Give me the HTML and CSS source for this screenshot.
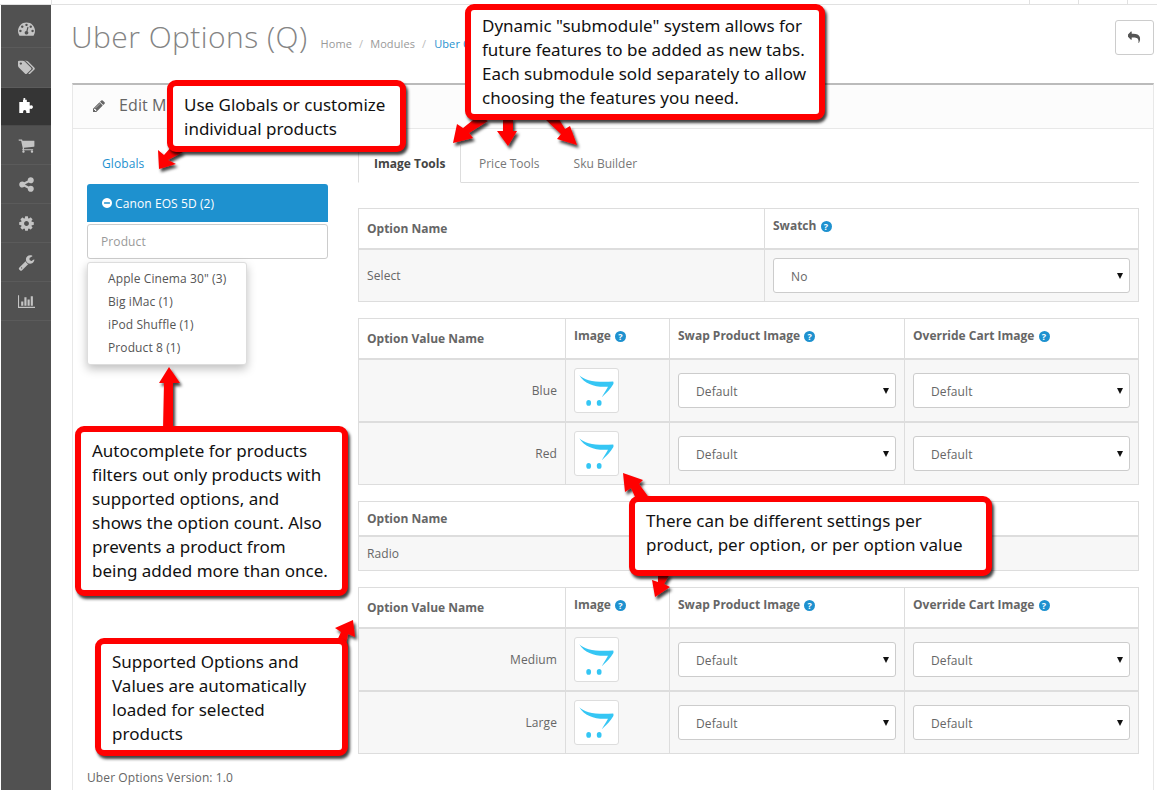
FILE: index.html
```html
<!DOCTYPE html>
<html lang="en">
<head>
<meta charset="utf-8">
<title>Uber Options (Q)</title>
<link rel="stylesheet" href="styles.css">
</head>
<body>
<svg class="defs" width="0" height="0" aria-hidden="true">
  <defs>
    <symbol id="cart-logo" viewBox="0 0 45 45">
      <path d="M4.500 6.500C10 12 22 14.500 40 13C40.500 14 40.500 15 40 16C37 21 33 25 28 29.500C30.500 25 33 21.500 34.500 18.500C22 19.500 10 16 4.500 6.500Z" fill="#35c6f4"/>
      <ellipse cx="14.300" cy="35.500" rx="2.500" ry="3" fill="#35c6f4"/>
      <ellipse cx="25.300" cy="35.500" rx="2.500" ry="3" fill="#35c6f4"/>
    </symbol>
    <filter id="arrow-shadow" x="-30%" y="-30%" width="170%" height="170%">
      <feDropShadow dx="2" dy="3" stdDeviation="1.500" flood-color="#000" flood-opacity=".75"/>
    </filter>
  </defs>
</svg>

<div class="topbar">
  <div class="topbar-logo"></div>
  <div class="topbar-fill"></div>
  <div class="topbar-cell"></div>
  <div class="topbar-cell"></div>
  <div class="topbar-cell topbar-cell-last"></div>
</div>

<div class="shell">
  <nav class="sidebar">
    <a class="nav-item nav-first"><svg class="nav-icon" viewBox="0 0 1792 1792"><path d="M384 1152q0-53-37.500-90.500t-90.500-37.500-90.500 37.500-37.500 90.500 37.500 90.500 90.500 37.500 90.500-37.500 37.500-90.500zm192-448q0-53-37.500-90.500t-90.500-37.500-90.500 37.500-37.500 90.500 37.500 90.500 90.500 37.500 90.500-37.500 37.500-90.500zm428 481l101-382q6-26-7.500-48.500t-38.500-29.500-48 6.500-30 39.500l-101 382q-60 5-107 43.500t-63 98.500q-20 77 20 146t117 89 146-20 89-117q16-60-6-117t-72-91zm660-33q0-53-37.500-90.500t-90.500-37.500-90.500 37.500-37.500 90.500 37.500 90.500 90.500 37.500 90.500-37.500 37.500-90.500zm-640-640q0-53-37.500-90.500t-90.500-37.500-90.500 37.500-37.500 90.500 37.500 90.500 90.500 37.500 90.500-37.500 37.500-90.500zm448 192q0-53-37.500-90.500t-90.500-37.500-90.500 37.500-37.500 90.500 37.500 90.500 90.500 37.500 90.500-37.500 37.500-90.500zm320 448q0 261-141 483-19 29-54 29h-1402q-35 0-54-29-141-221-141-483 0-182 71-348t191-286 286-191 348-71 348 71 286 191 191 286 71 348z"/></svg></a>
    <a class="nav-item nav-tall"><svg class="nav-icon" viewBox="0 0 1920 1792"><path d="M448 448q0-53-37.500-90.500t-90.500-37.500-90.500 37.500-37.500 90.500 37.500 90.500 90.500 37.500 90.500-37.500 37.500-90.500zm1067 576q0 53-37 90l-491 492q-39 37-91 37-53 0-90-37l-715-716q-38-37-64.500-101t-26.500-117v-416q0-52 38-90t90-38h416q53 0 117 26.500t102 64.500l715 714q37 39 37 91zm384 0q0 53-37 90l-491 492q-39 37-91 37-36 0-59-14t-53-45l470-470q37-37 37-90 0-52-37-91l-715-714q-38-38-102-64.500t-117-26.500h224q53 0 117 26.500t102 64.500l715 714q37 39 37 91z"/></svg></a>
    <a class="nav-item nav-active"><svg class="nav-icon" viewBox="0 0 16 16"><path fill-rule="evenodd" d="M5.200 1h1.600v1.500h1.500v2.200h2.700v3.200h.8a1.700 1.700 0 1 1 0 3.200h-.8v3.900h-3.200v-1.200a1.500 1.500 0 0 0-3 0v1.200h-3.600v-10.300h3.500v-2.200h.5z"/></svg></a>
    <a class="nav-item"><svg class="nav-icon" viewBox="0 0 1792 1792"><path d="M704 1536q0 52-38 90t-90 38-90-38-38-90 38-90 90-38 90 38 38 90zm896 0q0 52-38 90t-90 38-90-38-38-90 38-90 90-38 90 38 38 90zm128-1088v512q0 24-16.500 42.500t-40.500 21.500l-1044 122q13 60 13 70 0 16-24 64h920q26 0 45 19t19 45-19 45-45 19h-1024q-26 0-45-19t-19-45q0-11 8-31.500t16-36 21.500-40 15.500-29.500l-177-823h-204q-26 0-45-19t-19-45 19-45 45-19h256q16 0 28.500 6.500t19.500 15.500 13 24.500 8 26 5.500 29.500 4.500 26h1201q26 0 45 19t19 45z"/></svg></a>
    <a class="nav-item"><svg class="nav-icon" viewBox="0 0 1792 1792"><path d="M1344 1024q133 0 226.500 93.500t93.500 226.500-93.500 226.500-226.500 93.500-226.500-93.500-93.500-226.500q0-12 2-34l-360-180q-92 86-218 86-133 0-226.500-93.500t-93.500-226.500 93.500-226.500 226.500-93.500q126 0 218 86l360-180q-2-22-2-34 0-133 93.500-226.500t226.500-93.500 226.500 93.500 93.500 226.500-93.500 226.500-226.500 93.500q-126 0-218-86l-360 180q2 22 2 34t-2 34l360 180q92-86 218-86z"/></svg></a>
    <a class="nav-item"><svg class="nav-icon" viewBox="0 0 1792 1792"><path d="M1152 896q0-106-75-181t-181-75-181 75-75 181 75 181 181 75 181-75 75-181zm512-109v222q0 12-8 23t-20 13l-185 28q-19 54-39 91 35 50 107 138 10 12 10 25t-9 23q-27 37-99 108t-94 71q-12 0-26-9l-138-108q-44 23-91 38-16 136-29 186-7 28-36 28h-222q-14 0-24.500-8.500t-11.500-21.500l-28-184q-49-16-90-37l-141 107q-10 9-25 9-14 0-25-11-126-114-165-168-7-10-7-23 0-12 8-23 15-21 51-66.500t54-70.500q-27-50-41-99l-183-27q-13-2-21-12.500t-8-23.500v-222q0-12 8-23t19-13l186-28q14-46 39-92-40-57-107-138-10-12-10-24 0-10 9-23 26-36 98.500-107.500t94.500-71.500q13 0 26 10l138 107q44-23 91-38 16-136 29-186 7-28 36-28h222q14 0 24.500 8.500t11.500 21.500l28 184q49 16 90 37l142-107q9-9 24-9 13 0 25 10 129 119 165 170 7 8 7 22 0 12-8 23-15 21-51 66.500t-54 70.500q26 50 41 98l183 28q13 2 21 12.500t8 23.500z"/></svg></a>
    <a class="nav-item"><svg class="nav-icon" viewBox="0 0 1792 1792"><path d="M448 1472q0-26-19-45t-45-19-45 19-19 45 19 45 45 19 45-19 19-45zm644-420l-682 682q-37 37-90 37-52 0-91-37l-106-108q-38-36-38-90 0-53 38-91l681-681q39 98 114.500 173.500t173.500 114.500zm634-435q0 39-23 106-47 134-164.500 217.500t-258.500 83.500q-185 0-316.500-131.500t-131.500-316.500 131.500-316.500 316.500-131.500q58 0 121.500 16.500t107.500 46.500q16 11 16 28t-16 28l-293 169v224l193 107q5-3 79-48.500t135.500-81 70.500-35.500q15 0 23.500 10t8.500 25z"/></svg></a>
    <a class="nav-item"><svg class="nav-icon" viewBox="0 0 2048 1792"><path d="M640 896v512h-256v-512h256zm384-512v1024h-256v-1024h256zm1024 1152v128h-2048v-1536h128v1408h1920zm-640-896v768h-256v-768h256zm384-384v1152h-256v-1152h256z"/></svg></a>
  </nav>

  <main class="content">
    <header class="page-header">
      <div class="title-group">
        <h1 class="page-title">Uber Options (Q)</h1>
        <ul class="crumbs">
          <li>Home</li>
          <li class="crumb-sep">/</li>
          <li>Modules</li>
          <li class="crumb-sep">/</li>
          <li class="crumb-link">Uber O</li>
        </ul>
      </div>
      <button class="back-btn" type="button"><svg class="back-icon" viewBox="0 0 1792 1792"><path d="M1664 1120q0 166-127 451-3 7-10.500 24t-13.500 30-13 22q-12 17-28 17-15 0-23.500-10t-8.500-25q0-9 2.500-26.500t2.500-23.500q5-68 5-123 0-101-17.500-181t-48.500-138.500-80-101-105.500-69.500-133-42.500-154-21.500-175.500-6h-224v256q0 26-19 45t-45 19-45-19l-512-512q-19-19-19-45t19-45l512-512q19-19 45-19t45 19 19 45v256h224q713 0 875 403 53 134 53 333z"/></svg></button>
    </header>

    <section class="panel">
      <div class="panel-head">
        <svg class="pencil" viewBox="0 0 1792 1792"><path d="M491 1536l91-91-235-235-91 91v107h128v128h107zm523-928q0-22-22-22-10 0-17 7l-542 542q-7 7-7 17 0 22 22 22 10 0 17-7l542-542q7-7 7-17zm-54-192l416 416-832 832h-416v-416zm683 96q0 53-37 90l-166 166-416-416 166-165q36-38 90-38 53 0 91 38l235 234q37 39 37 91z"/></svg>
        <span class="panel-title">Edit M</span>
      </div>
      <div class="panel-body">
        <div class="cols">
          <aside class="left-col">
            <a class="globals">Globals</a>
            <div class="product-btn"><svg class="minus" viewBox="0 0 1536 1536"><path d="M1216 832v-128q0-26-19-45t-45-19h-768q-26 0-45 19t-19 45v128q0 26 19 45t45 19h768q26 0 45-19t19-45zm320-64q0 209-103 385.500t-279.500 279.500-385.500 103-385.500-103-279.500-279.500-103-385.500 103-385.500 279.500-279.500 385.500-103 385.500 103 279.500 279.500 103 385.500z"/></svg>Canon EOS 5D (2)</div>
            <div class="product-input">Product</div>
            <ul class="dropdown">
              <li>Apple Cinema 30" (3)</li>
              <li>Big iMac (1)</li>
              <li>iPod Shuffle (1)</li>
              <li>Product 8 (1)</li>
            </ul>
          </aside>

          <div class="right-col">
            <div class="tabs">
              <div class="tab tab-active">Image Tools</div>
              <div class="tab tab-second">Price Tools</div>
              <div class="tab">Sku Builder</div>
            </div>

            <table class="grid">
              <colgroup><col class="c-name-wide"><col></colgroup>
              <tr class="head head-mid">
                <th class="th-mid">Option Name</th>
                <th>Swatch <span class="help">?</span></th>
              </tr>
              <tr>
                <td>Select</td>
                <td><div class="select-wrap"><select class="sel"><option>No</option></select></div></td>
              </tr>
            </table>

            <table class="grid">
              <colgroup><col class="c-name"><col class="c-img"><col class="c-sel"><col></colgroup>
              <tr class="head head-tall">
                <th class="th-mid">Option Value Name</th>
                <th>Image <span class="help">?</span></th>
                <th>Swap Product Image <span class="help">?</span></th>
                <th>Override Cart Image <span class="help">?</span></th>
              </tr>
              <tr>
                <td class="value-name">Blue</td>
                <td><div class="thumb"><svg class="thumb-logo"><use href="#cart-logo"/></svg></div></td>
                <td><div class="select-wrap"><select class="sel"><option>Default</option></select></div></td>
                <td><div class="select-wrap"><select class="sel"><option>Default</option></select></div></td>
              </tr>
              <tr class="row-next">
                <td class="value-name">Red</td>
                <td><div class="thumb"><svg class="thumb-logo"><use href="#cart-logo"/></svg></div></td>
                <td><div class="select-wrap"><select class="sel"><option>Default</option></select></div></td>
                <td><div class="select-wrap"><select class="sel"><option>Default</option></select></div></td>
              </tr>
            </table>

            <table class="grid">
              <colgroup><col class="c-name-wide"><col></colgroup>
              <tr class="head">
                <th class="th-mid">Option Name</th>
                <th></th>
              </tr>
              <tr>
                <td>Radio</td>
                <td></td>
              </tr>
            </table>

            <table class="grid grid-last">
              <colgroup><col class="c-name"><col class="c-img"><col class="c-sel"><col></colgroup>
              <tr class="head head-mid">
                <th class="th-mid">Option Value Name</th>
                <th>Image <span class="help">?</span></th>
                <th>Swap Product Image <span class="help">?</span></th>
                <th>Override Cart Image <span class="help">?</span></th>
              </tr>
              <tr>
                <td class="value-name">Medium</td>
                <td><div class="thumb"><svg class="thumb-logo"><use href="#cart-logo"/></svg></div></td>
                <td><div class="select-wrap"><select class="sel"><option>Default</option></select></div></td>
                <td><div class="select-wrap"><select class="sel"><option>Default</option></select></div></td>
              </tr>
              <tr class="row-next">
                <td class="value-name">Large</td>
                <td><div class="thumb"><svg class="thumb-logo"><use href="#cart-logo"/></svg></div></td>
                <td><div class="select-wrap"><select class="sel"><option>Default</option></select></div></td>
                <td><div class="select-wrap"><select class="sel"><option>Default</option></select></div></td>
              </tr>
            </table>
          </div>
        </div>
        <p class="version">Uber Options Version: 1.0</p>
      </div>
    </section>
  </main>
</div>

<svg class="arrows" viewBox="0 0 1157 790" aria-hidden="true">
  <g class="arrow-set">
    <polygon points="172,146 183,152 168,160 176,164 159,169 158,150 164,155"/>
    <polygon points="478,116 488,121 469,133 473,138 453,143 457,124 463,128"/>
    <polygon points="503,118 513,118 513,131 517,131 508,146 497,131 503,131"/>
    <polygon points="546,120 557,116 565,129 570,126 577,145 557,139 561,134"/>
    <polygon points="163,430 173,430 173,383 180,383 169,367 159,383 164,383"/>
    <polygon points="335,645 346,645 348,634 355,637 353,620 335,628 341,632"/>
    <polygon points="636,499 650,499 639,484 643,480 623,473 625,492 631,488"/>
    <polygon points="658,574 670,574 664,584 670,587 655,597 652,580 658,582"/>
  </g>
</svg>

<div class="callout c-globals">Use Globals or customize<br>individual products</div>
<div class="callout c-tabs">Dynamic "submodule" system allows for<br>future features to be added as new tabs.<br>Each submodule sold separately to allow<br>choosing the features you need.</div>
<div class="callout c-auto">Autocomplete for products<br>filters out only products with<br>supported options, and<br>shows the option count. Also<br>prevents a product from<br>being added more than once.</div>
<div class="callout c-supported">Supported Options and<br>Values are automatically<br>loaded for selected<br>products</div>
<div class="callout c-settings">There can be different settings per<br>product, per option, or per option value</div>
</body>
</html>
```

FILE: styles.css
```css
* { box-sizing: border-box; }

html, body {
  margin: 0;
  height: 790px;
  overflow: hidden;
  background: #fff;
}

body {
  position: relative;
  font-family: "Open Sans", "Liberation Sans", sans-serif;
  font-size: 12px;
  line-height: 17px;
  color: #666;
  letter-spacing: .1px;
}

.defs { position: absolute; }

/* top bar */
.topbar {
  display: flex;
  height: 5px;
  border-bottom: 1px solid #e1e1e1;
}
.topbar-logo { width: 52px; border-right: 1px solid #e1e1e1; }
.topbar-fill { flex: 1; }
.topbar-cell { width: 49px; border-left: 1px solid #e1e1e1; }
.topbar-cell-last { width: 30px; }

.shell { display: flex; height: 785px; }

/* sidebar */
.sidebar {
  flex: none;
  width: 51px;
  border-left: 1px solid #fff;
  background: #515151;
}
.nav-item {
  display: flex;
  align-items: center;
  justify-content: center;
  height: 39px;
  border-bottom: 1px solid #5b5b5b;
  color: #c4c4c4;
}
.nav-first { height: 43px; padding-top: 5px; }
.nav-tall { height: 40px; }
.nav-active {
  height: 38px;
  padding-bottom: 3px;
  background: #353535;
  border-bottom-color: #4a4a4a;
  color: #fff;
}
.nav-icon { width: 17px; height: 17px; fill: currentColor; }

/* content */
.content { flex: 1; padding: 0 3px 0 21px; min-width: 0; }

.page-header {
  display: flex;
  justify-content: space-between;
  align-items: flex-start;
  height: 78px;
  padding-top: 14px;
}
.title-group { display: flex; align-items: baseline; }
.page-title {
  margin: 0 0 0 -1px;
  font-size: 30px;
  line-height: 36px;
  font-weight: 300;
  color: #848484;
  letter-spacing: .45px;
}
.crumbs {
  display: flex;
  gap: 7px;
  margin: 0 0 0 13px;
  padding: 0;
  list-style: none;
  font-size: 11px;
  color: #999;
}
.crumb-sep { color: #bbb; }
.crumb-link { margin-left: 1px; color: #1e91cf; }

.back-btn {
  display: flex;
  align-items: center;
  justify-content: center;
  width: 39px;
  height: 35px;
  margin-top: 1px;
  padding: 0;
  background: #fff;
  border: 1px solid #ccc;
  border-radius: 3px;
}
.back-icon { width: 13px; height: 13px; fill: #555; }

/* panel */
.panel {
  height: 707px;
  border: 1px solid #e8e8e8;
  border-top: 2px solid #bbb;
  border-bottom: 0;
}
.panel-head {
  display: flex;
  align-items: center;
  gap: 13px;
  height: 44px;
  padding: 0 0 2px 19px;
  background: #fcfcfc;
  border-bottom: 1px solid #e8e8e8;
}
.pencil { width: 14px; height: 14px; fill: #666; }
.panel-title { font-size: 16px; color: #666; }

.panel-body { padding: 16px 14px 0; }
.cols { display: flex; gap: 30px; }

.left-col { flex: none; width: 241px; }
.globals {
  display: block;
  height: 39px;
  padding: 10px 15px 0;
  color: #1e91cf;
}
.product-btn {
  display: flex;
  align-items: center;
  gap: 3px;
  height: 38px;
  padding-left: 15px;
  background: #1e91cf;
  border-radius: 3px 3px 0 0;
  color: #fff;
}
.minus { width: 10px; height: 10px; fill: #fff; }
.product-input {
  height: 35px;
  margin-top: 2px;
  padding: 8px 13px;
  background: #fff;
  border: 1px solid #ccc;
  border-radius: 3px;
  color: #999;
}
.dropdown {
  width: 160px;
  height: 103px;
  margin: 3px 0 0;
  padding: 4px 0;
  list-style: none;
  background: #fff;
  border: 1px solid #ddd;
  border-radius: 3px;
  box-shadow: 0 4px 10px rgba(0, 0, 0, .25);
}
.dropdown li { height: 23px; padding: 3px 20px; white-space: nowrap; color: #555; }

.right-col { flex: none; width: 781px; }

/* tabs */
.tabs {
  display: flex;
  height: 38px;
  margin-bottom: 25px;
  border-bottom: 1px solid #ddd;
}
.tab { padding: 10px 17px 0; color: #777; white-space: nowrap; letter-spacing: 0; }
.tab-second { margin-left: 1px; }
.tab-active {
  flex: none;
  width: 103px;
  height: 38px;
  padding: 10px 15px 0;
  background: #fff;
  border: 1px solid #ddd;
  border-top: 0;
  border-bottom-color: #fff;
  font-weight: 700;
  color: #444;
}

/* tables */
.grid {
  width: 781px;
  margin-bottom: 16px;
  border-collapse: collapse;
  table-layout: fixed;
}
.grid-last { margin-bottom: 15px; }
.c-name-wide { width: 406px; }
.c-name { width: 207px; }
.c-img { width: 104px; }
.c-sel { width: 235px; }

.grid th, .grid td { border: 1px solid #ddd; padding: 8px; }
.grid th {
  height: 34px;
  border-bottom-width: 2px;
  background: #fff;
  text-align: left;
  vertical-align: top;
  font-weight: 700;
  letter-spacing: 0;
  color: #666;
}
.grid .th-mid { vertical-align: middle; }
.grid .head-mid th { height: 40px; }
.grid .head-tall th { height: 41px; }
.grid td { height: 34px; background: #f7f7f7; vertical-align: middle; }
.grid .row-next td { border-top-width: 2px; }
.grid .value-name { text-align: right; }

.help {
  display: inline-block;
  width: 11px;
  height: 11px;
  margin-left: 1px;
  border-radius: 50%;
  background: #1e91cf;
  color: #fff;
  font-size: 9px;
  line-height: 11px;
  text-align: center;
  vertical-align: 0;
  letter-spacing: 0;
}

.thumb {
  width: 45px;
  height: 45px;
  background: #fff;
  border: 1px solid #ddd;
  border-radius: 3px;
}
.thumb-logo { display: block; width: 43px; height: 43px; }

.select-wrap { position: relative; }
.select-wrap::after {
  content: "";
  position: absolute;
  top: 15px;
  right: 7px;
  border-style: solid;
  border-width: 6px 3px 0;
  border-color: #111 transparent transparent;
}
.sel {
  display: block;
  width: 100%;
  height: 35px;
  padding: 2px 0 0 17px;
  appearance: none;
  background: #fff;
  border: 1px solid #ccc;
  border-radius: 3px;
  font: inherit;
  letter-spacing: inherit;
  color: #666;
}

.version { margin: 0; }

/* annotations lying over the screenshot */
.arrows {
  position: absolute;
  left: 0;
  top: 0;
  width: 1157px;
  height: 790px;
  pointer-events: none;
}
.arrow-set { fill: #f00; filter: url(#arrow-shadow); }

.callout {
  position: absolute;
  padding: 4px 11px;
  background: #fff;
  border: 6px solid #f00;
  border-radius: 9px;
  box-shadow: 2px 3px 3px rgba(0, 0, 0, .75);
  font-family: "Noto Sans", "Open Sans", sans-serif;
  font-size: 17px;
  line-height: 24px;
  letter-spacing: 0;
  color: #111;
  white-space: nowrap;
}
.c-globals { left: 167px; top: 80px; width: 239px; height: 72px; padding-top: 7px; }
.c-tabs { left: 465px; top: 4px; width: 360px; height: 116px; }
.c-auto { left: 75px; top: 426px; width: 273px; height: 170px; padding-top: 7px; }
.c-supported { left: 95px; top: 638px; width: 253px; height: 118px; padding-top: 6px; }
.c-settings { left: 629px; top: 496px; width: 363px; height: 80px; padding-top: 7px; }
```
